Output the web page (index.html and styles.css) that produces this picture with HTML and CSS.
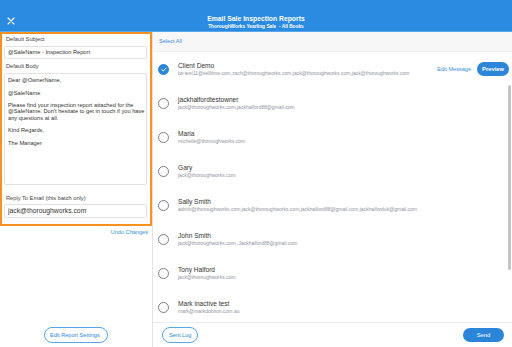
FILE: index.html
```
<!DOCTYPE html>
<html>
<head>
    <link rel="stylesheet" href="styles.css">
    <title>Email Sale Inspection Reports</title>
</head>
<body>
<div class="modal">
    <div class="header">
        <div class="close">
            <svg width="8" height="8" viewBox="0 0 8 8"><path d="M1 1L7 7M7 1L1 7" stroke="#fff" stroke-width="1.1" stroke-linecap="round"/></svg>
        </div>
        <div class="titles">
            <div class="title">Email Sale Inspection Reports</div>
            <div class="subtitle">ThoroughWorks Yearling Sale&nbsp; - All Books</div>
        </div>
        <div></div>
    </div>

    <div class="main">
        <div class="left">
            <div class="editor">
                <div class="label">Default Subject</div>
                <div class="input">@SaleName - Inspection Report</div>
                <div class="label">Default Body</div>
                <div class="textarea">Dear @OwnerName,

@SaleName

Please find your inspection report attached for the
@SaleName. Don't hesitate to get in touch if you have
any questions at all.

Kind Regards,

The Manager</div>
                <div class="label reply-label">Reply To Email (this batch only)</div>
                <div class="input big">jack@thoroughworks.com</div>
            </div>
            <div class="undo">Undo Changes</div>
            <div class="left-foot">
                <span class="btn-outline">Edit Report Settings</span>
            </div>
        </div>

        <div class="right">
            <div class="select-bar">Select All</div>
            <div class="list">
                <div class="row">
                    <span class="check checked">
                        <svg width="6" height="5" viewBox="0 0 6 5"><path d="M0.8 2.6L2.3 4L5.2 1" stroke="#fff" stroke-width="1" fill="none" stroke-linecap="round" stroke-linejoin="round"/></svg>
                    </span>
                    <div class="info">
                        <div class="name">Client Demo</div>
                        <div class="emails">tw-test11@selltime.com,zach@thoroughworks.com,jack@thoroughworks.com,jack@thoroughworks.com</div>
                    </div>
                    <span class="link">Edit Message</span>
                    <span class="btn-fill">Preview</span>
                </div>
                <div class="row">
                    <span class="check"></span>
                    <div class="info">
                        <div class="name">jackhalfordtestowner</div>
                        <div class="emails">jack@thoroughworks.com,jackhalford88@gmail.com</div>
                    </div>
                </div>
                <div class="row">
                    <span class="check"></span>
                    <div class="info">
                        <div class="name">Maria</div>
                        <div class="emails">michelle@thoroughworks.com</div>
                    </div>
                </div>
                <div class="row">
                    <span class="check"></span>
                    <div class="info">
                        <div class="name">Gary</div>
                        <div class="emails">jack@thoroughworks.com</div>
                    </div>
                </div>
                <div class="row">
                    <span class="check"></span>
                    <div class="info">
                        <div class="name">Sally Smith</div>
                        <div class="emails">admin@thoroughworks.com,jack@thoroughworks.com,jackhalford88@gmail.com,jackhalforduk@gmail.com</div>
                    </div>
                </div>
                <div class="row">
                    <span class="check"></span>
                    <div class="info">
                        <div class="name">John Smith</div>
                        <div class="emails">jack@thoroughworks.com,,Jackhalford88@gmail.com</div>
                    </div>
                </div>
                <div class="row">
                    <span class="check"></span>
                    <div class="info">
                        <div class="name">Tony Halford</div>
                        <div class="emails">jack@thoroughworks.com</div>
                    </div>
                </div>
                <div class="row">
                    <span class="check"></span>
                    <div class="info">
                        <div class="name">Mark inactive test</div>
                        <div class="emails">mark@markdobson.com.au</div>
                    </div>
                </div>
                <div class="scroll-thumb"></div>
            </div>
            <div class="right-foot">
                <span class="btn-outline">Sent Log</span>
                <span class="btn-fill send">Send</span>
            </div>
        </div>
    </div>
</div>
</body>
</html>
```

FILE: styles.css
```
body {
    margin: 0;
    font-family: "Liberation Sans", Arial, sans-serif;
    background-color: #ffffff;
    color: #333333;
}

.modal {
    width: 512px;
    height: 347px;
    display: flex;
    flex-direction: column;
    overflow: hidden;
}

.header {
    height: 31px;
    background-color: #2b8be0;
    border-bottom: 1px solid #5aa7ec;
    display: grid;
    grid-template-columns: 20px 1fr 20px;
    color: #ffffff;
}

.close {
    display: flex;
    align-items: center;
    justify-content: center;
    padding-top: 10px;
    padding-left: 2px;
}

.titles {
    text-align: center;
    padding-top: 15px;
}

.title {
    font-size: 6.8px;
    font-weight: bold;
    line-height: 8px;
}

.subtitle {
    font-size: 4.8px;
    font-weight: bold;
    line-height: 7px;
}

.main {
    flex: 1;
    display: flex;
    min-height: 0;
}

.left {
    width: 152px;
    border-right: 1px solid #e3e3e3;
    display: flex;
    flex-direction: column;
}

.editor {
    border: 2px solid #f7911f;
    padding: 2px 3px 5px 2px;
    height: 183px;
}

.label {
    font-size: 5.7px;
    color: #444444;
    line-height: 7px;
    padding-left: 2px;
    margin-bottom: 3px;
}

.input {
    border: 1px solid #e2e2e2;
    border-radius: 2px;
    height: 11px;
    font-size: 5.7px;
    line-height: 11px;
    padding-left: 3px;
    margin-bottom: 4px;
    color: #333333;
}

.input.big {
    height: 12px;
    line-height: 12px;
    font-size: 6.8px;
    margin-bottom: 0;
}

.textarea {
    border: 1px solid #e2e2e2;
    border-radius: 2px;
    height: 112px;
    white-space: pre;
    font-size: 5.7px;
    line-height: 6.3px;
    padding: 3px 0 0 3px;
    color: #333333;
    margin-bottom: 10px;
    box-sizing: border-box;
}

.reply-label {
    margin-bottom: 2px;
}

.undo {
    text-align: right;
    font-size: 5.6px;
    color: #3a8fdc;
    padding: 3px 4px 0 0;
}

.left-foot {
    flex: 1;
    display: flex;
    align-items: flex-end;
    justify-content: center;
    padding-bottom: 4px;
}

.btn-outline {
    border: 1px solid #5aa5ea;
    border-radius: 8px;
    color: #2b86da;
    font-size: 5.6px;
    padding: 0 5px;
    height: 14px;
    line-height: 14px;
    display: inline-block;
}

.left-foot .btn-outline {
    padding: 0 5px;
    width: 52px;
}

.right {
    flex: 1;
    display: flex;
    flex-direction: column;
    min-width: 0;
}

.select-bar {
    height: 19px;
    background-color: #f7f7f7;
    border-bottom: 1px solid #efefef;
    font-size: 5.6px;
    color: #3a8fdc;
    line-height: 19px;
    padding-left: 6px;
}

.list {
    flex: 1;
    position: relative;
    overflow: hidden;
}

.row {
    height: 34px;
    display: flex;
    align-items: center;
    padding-left: 5px;
    padding-right: 3px;
}

.check {
    width: 9px;
    height: 9px;
    border: 1.3px solid #7a7f8c;
    border-radius: 50%;
    flex-shrink: 0;
    display: flex;
    align-items: center;
    justify-content: center;
}

.check.checked {
    background-color: #2b86da;
    border-color: #2b86da;
}

.info {
    flex: 1;
    margin-left: 9px;
    min-width: 0;
}

.name {
    font-size: 6.6px;
    color: #333333;
    line-height: 8px;
}

.emails {
    font-size: 5px;
    color: #8f949e;
    line-height: 7px;
    white-space: nowrap;
}

.link {
    font-size: 5.6px;
    color: #3a8fdc;
    margin-right: 6px;
}

.btn-fill {
    background-color: #2b86da;
    color: #ffffff;
    font-size: 5.8px;
    font-weight: bold;
    border-radius: 8px;
    height: 14px;
    line-height: 14px;
    padding: 0 5px;
    display: inline-block;
}

.scroll-thumb {
    position: absolute;
    right: 1px;
    top: 33px;
    width: 3px;
    height: 185px;
    border-radius: 2px;
    background-color: #c4c4c4;
}

.right-foot {
    height: 24px;
    border-top: 1px solid #ececec;
    display: flex;
    align-items: center;
    justify-content: space-between;
    padding: 0 8px 0 9px;
}

.right-foot .btn-outline {
    padding: 0 6px;
}

.send {
    width: 31px;
    text-align: center;
    font-weight: normal;
}
```
